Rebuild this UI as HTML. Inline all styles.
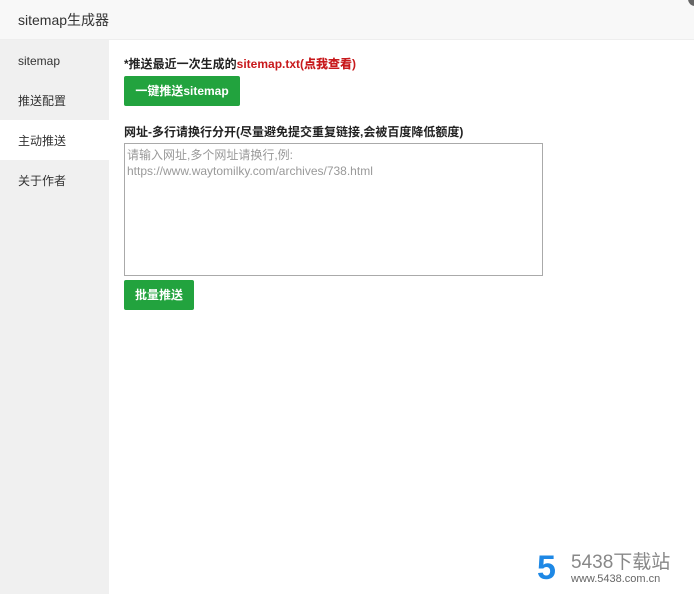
<!DOCTYPE html>
<html><head><meta charset="utf-8"><style>
*{margin:0;padding:0;box-sizing:border-box}
body{width:694px;height:594px;overflow:hidden;background:#fff;font-family:"Liberation Sans","Noto Sans CJK SC",sans-serif;position:relative;color:#333}
.hdr{position:absolute;left:0;top:0;width:694px;height:40px;background:#f8f8f8;border-bottom:1px solid #eee;font-size:14px;line-height:40px;padding-left:18px;color:#333}
.x{position:absolute;right:-8px;top:-8px;width:14px;height:14px;border-radius:50%;background:#666}
.side{position:absolute;left:0;top:40px;width:109px;height:554px;background:#f0f0f0}
.side div{height:40px;line-height:42px;padding-left:18px;font-size:12px;color:#333}
.side .on{background:#fff}
.main{position:absolute;left:124px;top:40px;font-size:12px}
.t1{position:absolute;top:15px;white-space:nowrap;font-weight:bold;color:#222}
.t1 b{color:#c8191c}
.btn{position:absolute;background:#22a33e;color:#fff;font-weight:bold;font-size:12px;border-radius:2px;text-align:center}
.t2{position:absolute;top:83px;white-space:nowrap;font-weight:bold;color:#222}
.ta{position:absolute;left:0;top:103px;width:419px;height:133px;border:1px solid #aaa;padding:3px 2px;color:#999;font-size:12px;line-height:16px}
.logo{position:absolute;left:537px;top:552px}
</style></head><body>
<div class="hdr">sitemap生成器</div><div class="x"></div>
<div class="side"><div>sitemap</div><div>推送配置</div><div class="on">主动推送</div><div>关于作者</div></div>
<div class="main">
<div class="t1">*推送最近一次生成的<b>sitemap.txt(点我查看)</b></div>
<div class="btn" style="left:0;top:36px;width:116px;height:30px;line-height:30px">一键推送sitemap</div>
<div class="t2">网址-多行请换行分开(尽量避免提交重复链接,会被百度降低额度)</div>
<div class="ta">请输入网址,多个网址请换行,例:<br>https://www.waytomilky.com/archives/738.html</div>
<div class="btn" style="left:0;top:240px;width:70px;height:30px;line-height:30px">批量推送</div>
</div>
<div class="logo">
<div style="position:absolute;left:0;top:0;font:bold 34px 'Liberation Sans';color:#1e88e5;line-height:32px">5</div>
<div style="position:absolute;left:34px;top:0;font-size:19px;color:#888;white-space:nowrap;line-height:22px">5438下载站</div>
<div style="position:absolute;left:34px;top:21px;font-size:11px;color:#666;white-space:nowrap">www.5438.com.cn</div>
</div>
</body></html>
